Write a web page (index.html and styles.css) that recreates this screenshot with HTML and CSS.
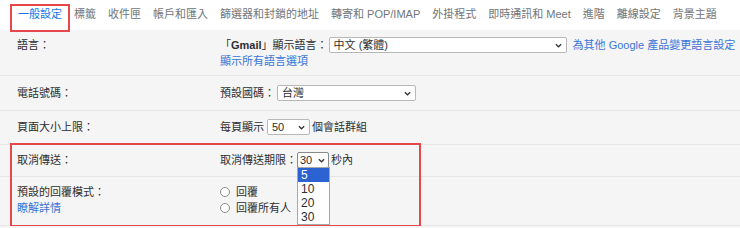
FILE: index.html
```html
<!DOCTYPE html>
<html lang="zh-Hant">
<head>
    <meta charset="UTF-8">
    <title>設定</title>
    <link rel="stylesheet" href="styles.css">
</head>
<body>
    <div class="tabs">
        <a class="tab active">一般設定</a>
        <a class="tab">標籤</a>
        <a class="tab">收件匣</a>
        <a class="tab">帳戶和匯入</a>
        <a class="tab">篩選器和封鎖的地址</a>
        <a class="tab">轉寄和 POP/IMAP</a>
        <a class="tab">外掛程式</a>
        <a class="tab">即時通訊和 Meet</a>
        <a class="tab">進階</a>
        <a class="tab">離線設定</a>
        <a class="tab">背景主題</a>
    </div>

    <div class="settings">
        <div class="row row-lang">
            <div class="label">語言：</div>
            <div class="value">
                <div class="line">
                    「<b>Gmail</b>」顯示語言：
                    <div class="select select-lang">
                        <span>中文 (繁體)</span>
                        <svg class="chev" viewBox="0 0 10 6"><path d="M1.2 1.2 5 4.8 8.8 1.2"/></svg>
                    </div>
                    <a class="link">為其他 Google 產品變更語言設定</a>
                </div>
                <a class="link">顯示所有語言選項</a>
            </div>
        </div>

        <div class="row row-phone">
            <div class="label">電話號碼：</div>
            <div class="value">
                <div class="line">
                    預設國碼：
                    <div class="select select-country">
                        <span>台灣</span>
                        <svg class="chev" viewBox="0 0 10 6"><path d="M1.2 1.2 5 4.8 8.8 1.2"/></svg>
                    </div>
                </div>
            </div>
        </div>

        <div class="row row-page">
            <div class="label">頁面大小上限：</div>
            <div class="value">
                <div class="line">
                    每頁顯示
                    <div class="select select-page">
                        <span>50</span>
                        <svg class="chev" viewBox="0 0 10 6"><path d="M1.2 1.2 5 4.8 8.8 1.2"/></svg>
                    </div>
                    個會話群組
                </div>
            </div>
        </div>

        <div class="marked">
            <div class="row row-undo">
                <div class="label">取消傳送：</div>
                <div class="value">
                    <div class="line">
                        取消傳送期限：
                        <div class="select select-undo open">
                            <span>30</span>
                            <svg class="chev" viewBox="0 0 10 6"><path d="M1.2 1.2 5 4.8 8.8 1.2"/></svg>
                            <ul class="options">
                                <li class="selected">5</li>
                                <li>10</li>
                                <li>20</li>
                                <li>30</li>
                            </ul>
                        </div>
                        秒內
                    </div>
                </div>
            </div>

            <div class="row row-reply">
                <div class="label">
                    預設的回覆模式：<br>
                    <a class="link">瞭解詳情</a>
                </div>
                <div class="value">
                    <label class="radio"><span class="dot"></span>回覆</label>
                    <label class="radio"><span class="dot"></span>回覆所有人</label>
                </div>
            </div>
        </div>
    </div>
</body>
</html>
```

FILE: styles.css
```css
body {
    margin: 0;
    font-family: "Liberation Sans", "Noto Sans CJK TC", sans-serif;
    font-size: 11px;
    color: #2e2e2e;
    background-color: #f5f5f5;
}
.tabs {
    display: flex;
    height: 30px;
    padding-left: 12px;
    background-color: #fff;
}
.tab {
    margin-top: 6px;
    padding: 0 6px 5px;
    line-height: 16px;
    color: #70757a;
    white-space: nowrap;
}
.tab.active {
    color: #1a73e8;
    outline: 2px solid #e5474b; /* annotation box */
    outline-offset: 0;
}
.row {
    display: grid;
    grid-template-columns: 203px 1fr;
    padding-left: 17px;
    line-height: 16px;
    border-bottom: 1px solid #e6e6e6;
}
.row-lang { padding-top: 7px; padding-bottom: 6px; }
.row-phone { padding-top: 9px; padding-bottom: 9px; }
.row-page { padding-top: 8px; padding-bottom: 9px; }
.row-undo { padding-top: 7px; padding-bottom: 8px; }
.row-reply { padding-top: 7px; padding-bottom: 9px; }
.line {
    display: flex;
    align-items: center;
    height: 16px;
    white-space: nowrap;
}
.link {
    color: #3a74d8;
    cursor: pointer;
}
.line .link {
    margin-left: 4px;
}
.select {
    position: relative;
    display: flex;
    align-items: center;
    justify-content: space-between;
    box-sizing: border-box;
    height: 16px;
    padding: 0 4px;
    margin: 0 2px 0 2px;
    background-color: #fff;
    border: 1px solid #b8b8b8;
    border-radius: 2px;
    color: #2e2e2e;
}
.select-lang { width: 238px; margin-left: 1px; }
.select-country { width: 139px; }
.select-page { width: 43px; margin-left: 3px; }
.select-undo { width: 32px; margin-left: 0; padding-left: 2px; padding-right: 3px; }
.select.open {
    border-color: #8a8a8a;
}
.chev {
    width: 7px;
    height: 5px;
    fill: none;
    stroke: #333;
    stroke-width: 1.8;
}
.options {
    position: absolute;
    top: 100%;
    left: -1px;
    z-index: 5;
    width: 31px;
    margin: 0;
    padding: 0;
    list-style: none;
    background-color: #fff;
    border: 1px solid #a8a8a8;
    font-size: 12px;
}
.options li {
    height: 14px;
    line-height: 14px;
    padding-left: 3px;
}
.options li.selected {
    background-color: #2d62d2;
    color: #fff;
}
.radio {
    display: flex;
    align-items: center;
    height: 16px;
}
.dot {
    box-sizing: border-box;
    width: 10px;
    height: 10px;
    margin-right: 6px;
    border: 1px solid #8c8c8c;
    border-radius: 50%;
    background-color: #fff;
}
.marked {
    position: relative;
}
.marked::after {
    content: "";
    position: absolute;
    left: 10px;
    top: -2px;
    bottom: -1px;
    width: 411px;
    box-sizing: border-box;
    border: 2px solid #e5474b; /* annotation box */
    pointer-events: none;
}
```
